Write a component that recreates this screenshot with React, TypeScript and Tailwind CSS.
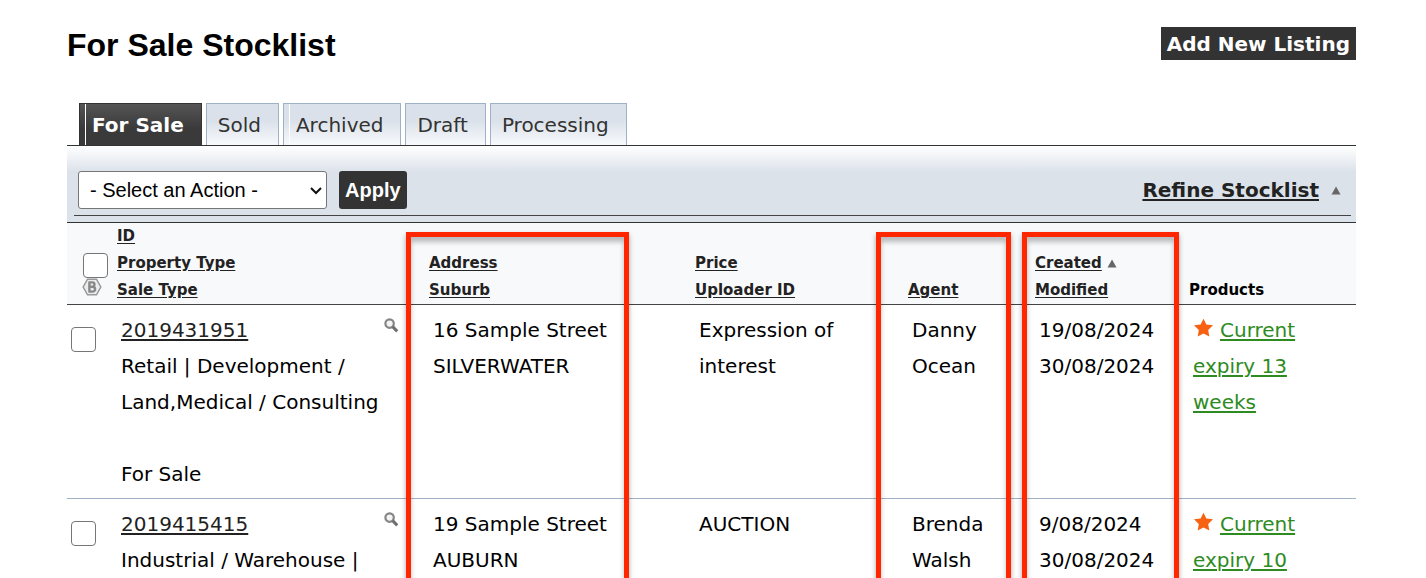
const tabs = [
  { label: 'For Sale', active: true, split: true },
  { label: 'Sold' },
  { label: 'Archived', split: true },
  { label: 'Draft' },
  { label: 'Processing' },
]

const listings = [
  {
    id: '2019431951',
    type: 'Retail | Development / Land,Medical / Consulting',
    saleType: 'For Sale',
    address: '16 Sample Street',
    suburb: 'SILVERWATER',
    price: 'Expression of interest',
    agent: 'Danny Ocean',
    created: '19/08/2024',
    modified: '30/08/2024',
    product: 'Current expiry 13 weeks',
  },
  {
    id: '2019415415',
    type: 'Industrial / Warehouse |',
    saleType: '',
    address: '19 Sample Street',
    suburb: 'AUBURN',
    price: 'AUCTION',
    agent: 'Brenda Walsh',
    created: '9/08/2024',
    modified: '30/08/2024',
    product: 'Current expiry 10',
  },
]

function SortLink({ children }: { children: string }) {
  return (
    <a href="#" className="text-[#222] underline underline-offset-2">
      {children}
    </a>
  )
}

function UpArrow() {
  return (
    <svg viewBox="0 0 10 9" className="inline-block h-[9px] w-[10px]" aria-hidden="true">
      <path d="M5 0.5 9.5 8.5H0.5Z" fill="#666" />
    </svg>
  )
}

function Magnifier() {
  return (
    <svg viewBox="0 0 15 16" className="h-4 w-[15px]" fill="none" aria-hidden="true">
      <circle cx="5.6" cy="6.6" r="4.2" fill="#f4f4f4" stroke="#858585" strokeWidth="2.2" />
      <path d="M8.6 9.6 13.2 14.4" stroke="#6f6f6f" strokeWidth="3" />
    </svg>
  )
}

function Star() {
  return (
    <svg viewBox="0 0 20 20" className="mr-[7px] inline-block h-5 w-5 align-[-1px]" aria-hidden="true">
      <path d="M10.5 0.8 13.4 6.4 20 7.3 15.2 12 16.3 18.6 10.5 15.6 4.7 18.6 5.8 12 1 7.3 7.6 6.4Z" fill="#f76212" />
    </svg>
  )
}

function HexBadge() {
  return (
    <svg viewBox="0 0 20 18" className="block h-[18px] w-5" aria-hidden="true">
      <path d="M5.5 1.2H14.5L18.8 9 14.5 16.8H5.5L1.2 9Z" fill="#ececec" stroke="#999" strokeWidth="1.5" />
      <path
        d="M7.4 4.4V13.6M6.4 4.4H10.3C13.2 4.4 13.2 8.8 10.3 8.8H7.5M10.3 8.8C14 8.8 14 13.6 10.3 13.6H6.4"
        fill="none"
        stroke="#888"
        strokeWidth="2.4"
      />
    </svg>
  )
}

function Checkbox({ label }: { label: string }) {
  return (
    <input
      type="checkbox"
      aria-label={label}
      className="block h-[25px] w-[25px] appearance-none rounded-[4px] border border-[#767676] bg-white checked:bg-[#1a73e8]"
    />
  )
}

function Highlight({ className }: { className: string }) {
  return (
    <div
      className={`pointer-events-none absolute top-[9px] bottom-0 border-[5px] border-b-0 border-[#ff2600] shadow-[0_3px_5px_rgba(0,0,0,0.35),inset_0_5px_5px_rgba(0,0,0,0.25)] ${className}`}
    />
  )
}

export default function App() {
  return (
    <div className="h-screen overflow-hidden bg-white pr-[70px] pl-[67px] font-['DejaVu_Sans',Verdana,sans-serif] text-xl text-black">
      <header className="flex items-start justify-between pt-[27px]">
        <h1 className="font-['Liberation_Sans',Arial,sans-serif] text-[32px] leading-9 font-bold">For Sale Stocklist</h1>
        <button className="h-[33px] bg-[#333] px-[6px] pt-px font-bold text-white">Add New Listing</button>
      </header>

      <nav className="mt-10 flex gap-1 pl-3">
        {tabs.map((tab) => (
          <a
            key={tab.label}
            href="#"
            className={`relative h-[42px] border border-b-0 pr-[17px] leading-[42px] ${
              tab.active
                ? 'border-[#333] bg-linear-to-b from-[#555] to-[#3a3a3a] to-60% font-bold text-white'
                : 'border-[#9fb1c6] bg-linear-to-b from-[#dae1ea] from-40% to-[#f8fafc] text-[#333]'
            } ${tab.split ? 'pl-3' : 'pl-[11px]'}`}
          >
            {tab.split && <span className="absolute inset-y-0 left-[5px] w-px bg-white" />}
            {tab.label}
          </a>
        ))}
      </nav>

      <section className="border-y border-[#333] bg-linear-to-b from-white to-[#dce2ea] to-[26px] pt-[25px] pr-[5px] pb-[6px] pl-[7px]">
        <div className="flex items-start border-b border-[#444] pb-[6px] pl-1">
          <div className="relative">
            <select
              aria-label="Action"
              className="h-[38px] w-[249px] appearance-none rounded-[3px] border border-[#767676] bg-white pl-[11px] font-['Liberation_Sans',Arial,sans-serif] text-xl"
            >
              <option>- Select an Action -</option>
            </select>
            <svg viewBox="0 0 12 8" className="pointer-events-none absolute top-4 right-[5px] h-2 w-3" fill="none">
              <path d="M1 1 6 6 11 1" stroke="#111" strokeWidth="2" />
            </svg>
          </div>
          <button className="ml-3 h-[38px] rounded-[3px] bg-[#333] px-[6px] font-['Liberation_Sans',Arial,sans-serif] font-bold text-white">
            Apply
          </button>
          <div className="ml-auto flex items-center gap-3 pr-[10px] leading-[38px]">
            <a href="#" className="font-bold text-[#222] underline underline-offset-2">
              Refine Stocklist
            </a>
            <UpArrow />
          </div>
        </div>
      </section>

      <div className="relative">
        <table className="w-full table-fixed border-collapse">
          <colgroup>
            <col className="w-[50px]" />
            <col className="w-[312px]" />
            <col className="w-[266px]" />
            <col className="w-[213px]" />
            <col className="w-[127px]" />
            <col className="w-[154px]" />
            <col className="w-[167px]" />
          </colgroup>
          <thead>
            <tr className="border-b border-[#444] bg-[#f8f9fb] text-left align-bottom text-[15px] leading-[27px]">
              <th className="pb-2 pl-4">
                <Checkbox label="Select all" />
                <div className="-ml-px">
                  <HexBadge />
                </div>
              </th>
              <th>
                <SortLink>ID</SortLink>
                <br />
                <SortLink>Property Type</SortLink>
                <br />
                <SortLink>Sale Type</SortLink>
              </th>
              <th>
                <SortLink>Address</SortLink>
                <br />
                <SortLink>Suburb</SortLink>
              </th>
              <th>
                <SortLink>Price</SortLink>
                <br />
                <SortLink>Uploader ID</SortLink>
              </th>
              <th>
                <SortLink>Agent</SortLink>
              </th>
              <th>
                <SortLink>Created</SortLink> <UpArrow />
                <br />
                <SortLink>Modified</SortLink>
              </th>
              <th>Products</th>
            </tr>
          </thead>
          <tbody>
            {listings.map((item) => (
              <tr key={item.id} className="border-b border-[#9fb1c6] align-top leading-9">
                <td className="pt-[22px] pl-1">
                  <Checkbox label={`Select ${item.id}`} />
                </td>
                <td className="pt-[7px] pb-[6px] pl-1">
                  <div className="flex justify-between pr-[30px]">
                    <a href="#" className="text-[#222] underline underline-offset-2">
                      {item.id}
                    </a>
                    <a href="#" aria-label="Preview" className="pt-[5px]">
                      <Magnifier />
                    </a>
                  </div>
                  <p className="pr-7">{item.type}</p>
                  {item.saleType && <p className="pt-9">{item.saleType}</p>}
                </td>
                <td className="pt-[7px] pl-1">
                  {item.address}
                  <br />
                  {item.suburb}
                </td>
                <td className="pt-[7px] pr-10 pl-1">{item.price}</td>
                <td className="pt-[7px] pr-8 pl-1">{item.agent}</td>
                <td className="pt-[7px] pl-1">
                  {item.created}
                  <br />
                  {item.modified}
                </td>
                <td className="pt-[7px] pr-12 pl-1">
                  <Star />
                  <a href="#" className="text-[#2e8b22] underline underline-offset-2">
                    {item.product}
                  </a>
                </td>
              </tr>
            ))}
          </tbody>
        </table>
        <Highlight className="left-[339px] w-[223px]" />
        <Highlight className="left-[809px] w-[135px]" />
        <Highlight className="left-[955px] w-[157px]" />
      </div>
    </div>
  )
}
